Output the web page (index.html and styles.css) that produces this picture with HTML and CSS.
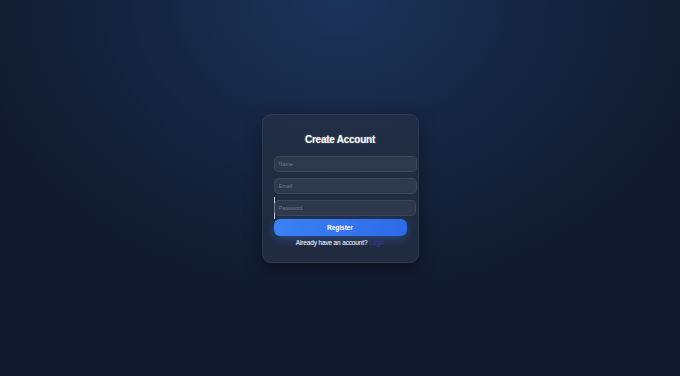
FILE: index.html
```html
<!DOCTYPE html>
<html lang="en">
<head>
  <meta charset="UTF-8">
  <meta name="viewport" content="width=device-width, initial-scale=1">
  <title>Create Account</title>
  <link rel="stylesheet" href="styles.css">
</head>
<body>
  <div class="register-card">
    <h2>Create Account</h2>
    <form class="register-form" onsubmit="return false">
      <input type="text" placeholder="Name">
      <input type="email" placeholder="Email">
      <div class="focus-line">
        <input type="password" placeholder="Password">
      </div>
      <button type="submit">Register</button>
    </form>
    <p class="switch">Already have an account? <a href="#">Login</a></p>
  </div>
</body>
</html>
```

FILE: styles.css
```css
html, body {
  height: 100%;
}

body {
  margin: 0;
  font-family: 'Liberation Sans', Arial, sans-serif;
  background: radial-gradient(ellipse 380px 300px at 50% 0%, #1c3459 0%, #162746 45%, #111a2c 100%);
  background-color: #111a2c;
  display: flex;
  justify-content: center;
  align-items: center;
  color: #fff;
}

.register-card {
  width: 133px;
  padding: 11px 11px 15px;
  background: rgba(38, 48, 68, 0.75);
  border: 1px solid rgba(255, 255, 255, 0.06);
  border-radius: 9px;
  box-shadow: 0 6px 18px rgba(0, 0, 0, 0.35);
  text-align: center;
}

h2 {
  font-size: 10px;
  line-height: 13px;
  font-weight: bold;
  letter-spacing: -0.25px;
  margin: 7px 0 10px;
  text-shadow: 0 0 2px rgba(255, 255, 255, 0.4);
}

.register-form {
  display: flex;
  flex-direction: column;
  align-items: flex-start;
}

input {
  display: block;
  box-sizing: content-box;
  width: 100%;
  height: 14px;
  padding: 0 4px;
  margin: 0 0 6px;
  font-family: inherit;
  font-size: 5.5px;
  color: #fff;
  background: rgba(52, 62, 82, 0.7);
  border: 1px solid rgba(255, 255, 255, 0.07);
  border-radius: 5px;
  outline: none;
}

input::placeholder {
  color: #6f7889;
}

.focus-line {
  display: flex;
  width: 100%;
  margin-top: -3px;
  padding: 3px 0;
  border-left: 1px solid rgba(230, 235, 245, 0.85);
  box-sizing: border-box;
}

.focus-line input {
  flex: none;
  margin: 0 0 0 -1px;
}

button {
  width: 100%;
  height: 17px;
  padding: 0;
  font-family: inherit;
  font-size: 6.5px;
  font-weight: bold;
  color: #fff;
  background: linear-gradient(to right, #3a82f4, #2d6ae8);
  border: none;
  border-radius: 6px;
  box-shadow: 0 3px 10px rgba(59, 130, 246, 0.35);
  cursor: pointer;
}

.switch {
  margin: 2px 0 0;
  font-size: 6.5px;
  line-height: 9px;
  letter-spacing: -0.15px;
  color: #e6e9f0;
  text-shadow: 0 0 1px rgba(255, 255, 255, 0.4);
}

.switch a {
  color: #4a2f9c;
  text-decoration: none;
  text-shadow: none;
}
```
